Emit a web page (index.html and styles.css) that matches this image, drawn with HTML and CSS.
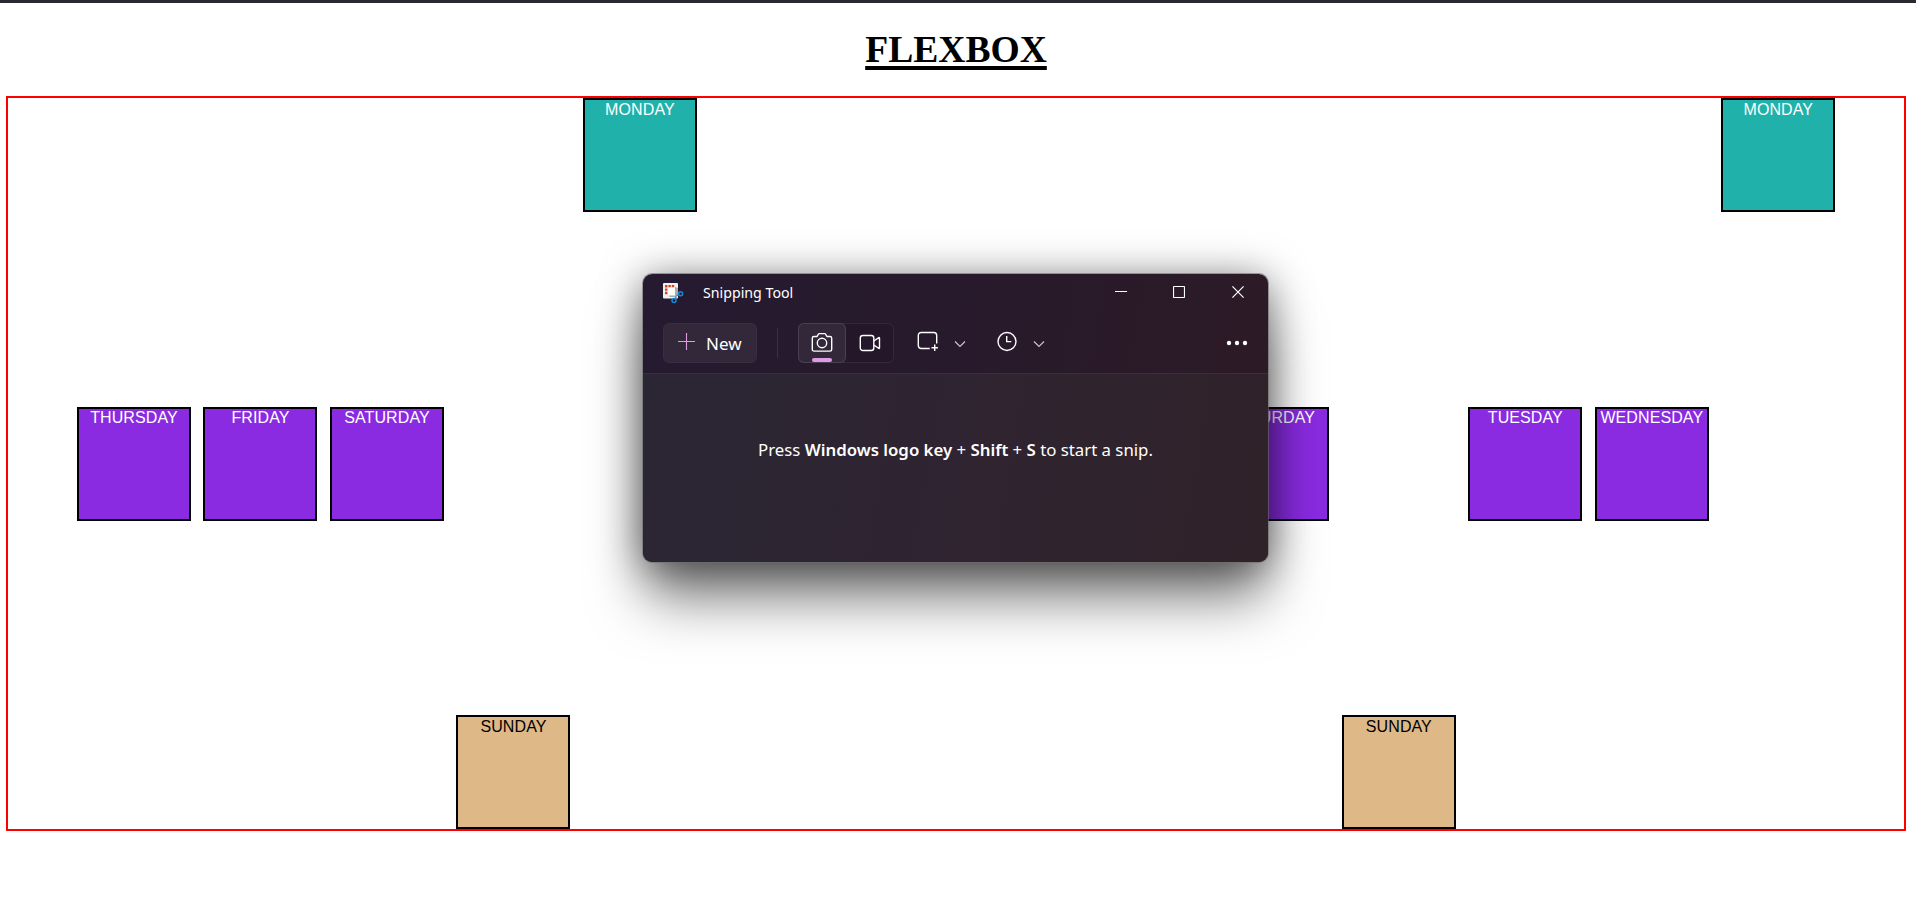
FILE: index.html
```html
<!DOCTYPE html>
<html lang="en">
<head>
<meta charset="utf-8">
<title>Flexbox</title>
<link rel="stylesheet" href="styles.css">
</head>
<body>
<h1 class="title">FLEXBOX</h1>
<main class="week">
  <div class="day mid">THURSDAY</div>
  <div class="day mid">FRIDAY</div>
  <div class="day mid">SATURDAY</div>
  <div class="day sun">SUNDAY</div>
  <div class="day mon">MONDAY</div>
  <div class="day mid"></div>
  <div class="day mid"></div>
  <div class="day mid"></div>
  <div class="day mid"></div>
  <div class="day mid">SATURDAY</div>
  <div class="day sun">SUNDAY</div>
  <div class="day mid">TUESDAY</div>
  <div class="day mid">WEDNESDAY</div>
  <div class="day mon">MONDAY</div>
</main>

<section class="window">
  <header class="titlebar">
    <svg class="logo" width="22" height="22" viewBox="0 0 22 22">
      <rect x="0" y="0" width="15" height="15.5" rx="1" fill="#f1f1f2"/>
      <path d="M2 3.2h9.5M3.2 2v9.5" stroke="#d8431a" stroke-width="2.4" stroke-dasharray="2.4 1" fill="none"/>
      <rect x="5" y="4.5" width="7" height="8" fill="#fff"/>
      <path d="M12 4v8.500H5.500l1.500 1.500h6.500l1.500-2V5z" fill="#a9adb2"/>
      <circle cx="17.6" cy="10.8" r="2" fill="none" stroke="#1689d6" stroke-width="1.500"/>
      <circle cx="11" cy="17.4" r="2" fill="none" stroke="#1689d6" stroke-width="1.500"/>
      <path d="M13.500 12.500l2.200-.8M12.300 15.600l.9-2" stroke="#1689d6" stroke-width="1.300"/>
    </svg>
    <span class="caption">Snipping Tool</span>
    <div class="controls">
      <svg width="12" height="12" viewBox="0 0 12 12"><path d="M0 5.500h12" /></svg>
      <svg width="12" height="12" viewBox="0 0 12 12"><rect x=".5" y=".5" width="11" height="11" rx=".8"/></svg>
      <svg width="12" height="12" viewBox="0 0 12 12"><path d="M.4.4l11.200 11.200M11.600.4L.4 11.600"/></svg>
    </div>
  </header>
  <div class="toolbar">
    <button class="new">
      <svg width="17" height="17" viewBox="0 0 17 17"><path d="M8.500 0v17M0 8.500h17" stroke="#dd9be6" stroke-width="1.100"/></svg>
      <span>New</span>
    </button>
    <span class="divider"></span>
    <div class="modes">
      <span class="mode active">
        <svg width="22" height="22" viewBox="0 0 22 22"><path d="M3 4.500h3l1.400-2.300c.3-.4.6-.6 1-.6h5.200c.4 0 .7.200 1 .6L16 4.500h3c1 0 1.700.7 1.700 1.700v11.200c0 1-.7 1.700-1.700 1.700H3c-1 0-1.700-.7-1.700-1.700V6.200c0-1 .7-1.700 1.700-1.700z"/><circle cx="11" cy="11" r="4.700"/></svg>
      </span>
      <span class="mode">
        <svg width="22" height="22" viewBox="0 0 22 22"><rect x="1.300" y="3.500" width="13.500" height="15" rx="2.500"/><path d="M14.800 9l5-3.400c.4-.2.700 0 .7.400v10c0 .4-.3.600-.7.400l-5-3.400"/></svg>
      </span>
    </div>
    <div class="picker shape">
      <svg width="22" height="22" viewBox="0 0 22 22"><path d="M12.800 17.500H4.200c-1.700 0-2.900-1.200-2.900-2.900V4.400c0-1.700 1.200-2.900 2.900-2.900h12.600c1.700 0 2.900 1.200 2.900 2.900v8.200M17.700 13.600v6.400M14.500 16.800h6.400"/></svg>
      <svg class="chev" width="12" height="12" viewBox="0 0 12 12"><path d="M1 3.500l5 5 5-5"/></svg>
    </div>
    <div class="picker timer">
      <svg width="22" height="22" viewBox="0 0 22 22"><circle cx="11" cy="10.500" r="9"/><path d="M10.700 5v5.600h4.600"/></svg>
      <svg class="chev" width="12" height="12" viewBox="0 0 12 12"><path d="M1 3.500l5 5 5-5"/></svg>
    </div>
    <svg class="more" width="22" height="6" viewBox="0 0 22 6"><circle cx="3" cy="3" r="2.200"/><circle cx="11" cy="3" r="2.200"/><circle cx="19" cy="3" r="2.200"/></svg>
  </div>
  <div class="body"><p class="hint">Press <b>Windows logo key</b> + <b>Shift</b> + <b>S</b> to start a snip.</p></div>
</section>
</body>
</html>
```
FILE: styles.css
```css
* { box-sizing: border-box; }
body {
  margin: 0;
  height: 912px;
  overflow: hidden;
  background: #fff;
  border-top: 3px solid #19171e;
  border-image: linear-gradient(#2b2930 66%, #08080a 67%) 3;
  border-image-width: 3px 0 0 0;
  font: 16px "Liberation Sans", Arial, sans-serif;
}
.title {
  margin: 0;
  height: 93px;
  padding: 26px 4px 0 0;
  text-align: center;
  font: bold 37.6px/42px "Liberation Serif", "Times New Roman", serif;
  text-decoration: underline;
  text-decoration-thickness: 4px;
  text-underline-offset: 4px;
  text-decoration-skip-ink: none;
}
.week {
  margin: 0 10px 0 6px;
  height: 735px;
  padding: 0 68.7px 0 69px;
  border: 2px solid #f00;
  display: flex;
  justify-content: space-between;
}
.day {
  width: 114px;
  height: 114px;
  border: 2px solid #000;
  text-align: center;
  line-height: 20px;
  letter-spacing: .1px;
  color: #fff;
}
.mon { background: lightseagreen; }
.mid { background: blueviolet; align-self: center; line-height: 18px; }
.sun { background: burlywood; color: #000; align-self: flex-end; }

.window {
  position: absolute;
  left: 643px;
  top: 274px;
  width: 625px;
  height: 288px;
  border-radius: 9px;
  background: linear-gradient(100deg, #251a30, #281a2c 50%, #2d1a25);
  box-shadow: 0 0 0 1px rgba(110, 110, 110, .6), 0 40px 56px -4px rgba(0, 0, 0, .5), 0 4px 40px rgba(0, 0, 0, .5);
  color: #fff;
  font-family: "Noto Sans", sans-serif;
  overflow: hidden;
}
.window svg { display: block; fill: none; stroke: #fff; stroke-width: 1.4; flex: none; }
.window svg.logo { stroke: none; }
.titlebar { display: flex; height: 40px; padding: 9px 24px 0 20px; }
.caption { margin-left: 18px; font-size: 14.2px; line-height: 20px; white-space: nowrap; }
.controls { margin: 3px 0 0 auto; display: flex; gap: 46px 46px; }
.controls svg:last-child { margin-left: 1px; }
.window .controls svg { stroke-width: 1.2; }
.toolbar { display: flex; height: 59px; padding: 9px 20px 0; align-items: flex-start; }
.new {
  width: 94px;
  height: 40px;
  display: flex;
  align-items: center;
  gap: 11px;
  padding: 0 0 0 14px;
  border: 1px solid #392d40;
  border-radius: 6px;
  background: #33273a;
  color: #fff;
  font: 17px "Noto Sans", sans-serif;
}
.new svg { margin-top: -4px; }
.divider { width: 1px; height: 30px; margin: 5px 20px 0; background: #3d3044; }
.modes {
  width: 96px;
  height: 40px;
  display: flex;
  border-radius: 6px;
  background: #231729;
  box-shadow: inset 0 0 0 1px #35283a;
}
.mode { width: 48px; height: 40px; padding: 9px 13px 0; }
.active {
  display: flex;
  flex-direction: column;
  gap: 4px;
  background: #33273a;
  border-radius: 6px;
  box-shadow: inset 0 0 0 1px #4b3f51;
}
.active::after { content: ""; width: 20px; height: 4px; margin-left: 1px; border-radius: 2px; background: #dc9ce3; }
.picker { display: flex; align-items: center; gap: 15px; margin-top: 8px; }
.shape { margin-left: 23px; }
.timer { margin-left: 30px; }
.window .chev { stroke: #c9c3cc; stroke-width: 1.2; margin-top: 3px; }
.window .more { margin: 17px 0 0 auto; fill: #fff; stroke: none; }
.body {
  height: 189px;
  padding-top: 64px;
  border-top: 1px solid #3c2e40;
  background: linear-gradient(100deg, #2b2634, #2f2431 50%, #2f2229);
}
.hint { margin: 0; text-align: center; font-size: 16.8px; line-height: 24px; white-space: nowrap; }
.hint b { font-weight: 600; }
```
